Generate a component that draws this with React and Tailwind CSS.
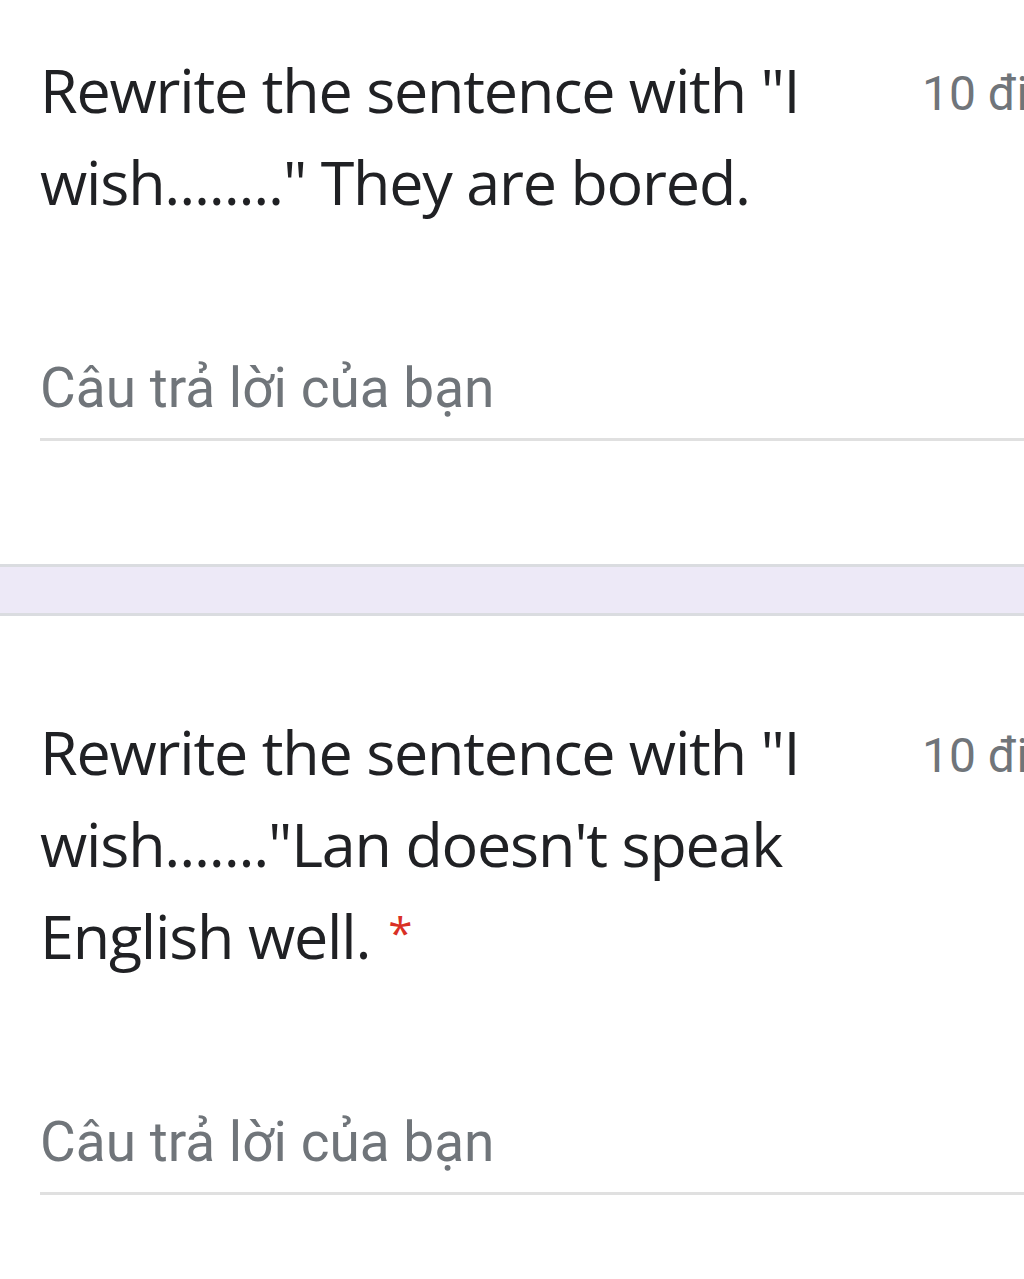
import React from 'react'

const questions = [
  { title: 'Rewrite the sentence with "I wish........" They are bored.', required: false },
  { title: 'Rewrite the sentence with "I wish......."Lan doesn\'t speak English well.', required: true },
]

function Question({ q }) {
  return (
    <div className="pl-[40px]">
      <div className="flex items-start">
        <h2 className="w-[850px] shrink-0 text-[61px] leading-[92px] text-[#202124] font-['Open_Sans',sans-serif] tracking-[-1.2px]">
          {q.title}
          {q.required && (
            <span className="ml-[18px] text-[44px] leading-none align-[10px] text-[#d93025]">*</span>
          )}
        </h2>
        <span className="ml-[32px] mt-[22px] shrink-0 whitespace-nowrap text-[48px] leading-[56px] text-[#70757a] font-['Roboto',sans-serif]">
          10 điểm
        </span>
      </div>
      <div className="mt-[128px] border-b-[3px] border-[#e0e0e0] pb-[18px]">
        <span className="block text-[55px] leading-[64px] text-[#70757a] font-['Roboto',sans-serif]">
          Câu trả lời của bạn
        </span>
      </div>
    </div>
  )
}

export default function App() {
  return (
    <div className="w-[1024px] h-[1279px] overflow-hidden bg-white">
      <div className="pt-[44px]">
        <Question q={questions[0]} />
      </div>
      <div className="mt-[123px] h-[52px] border-y-[3px] border-[#dadce0] bg-[#ede9f7]" />
      <div className="pt-[90px]">
        <Question q={questions[1]} />
      </div>
    </div>
  )
}
